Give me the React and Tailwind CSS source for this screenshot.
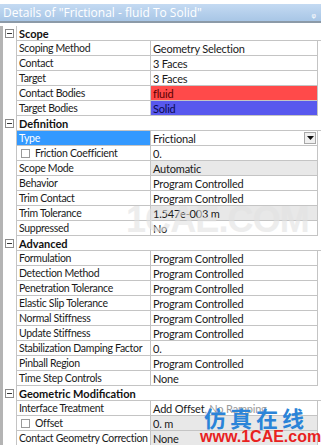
import React from 'react';

const sections = [
  {
    title: 'Scope',
    rows: [
      { name: 'Scoping Method', value: 'Geometry Selection' },
      { name: 'Contact', value: '3 Faces' },
      { name: 'Target', value: '3 Faces' },
      { name: 'Contact Bodies', value: 'fluid', tone: 'red' },
      { name: 'Target Bodies', value: 'Solid', tone: 'blue' },
    ],
  },
  {
    title: 'Definition',
    rows: [
      { name: 'Type', value: 'Frictional', selected: true, dropdown: true },
      { name: 'Friction Coefficient', value: '0.', check: true },
      { name: 'Scope Mode', value: 'Automatic', gray: true },
      { name: 'Behavior', value: 'Program Controlled' },
      { name: 'Trim Contact', value: 'Program Controlled' },
      { name: 'Trim Tolerance', value: '1.547e-003 m', gray: true },
      { name: 'Suppressed', value: 'No' },
    ],
  },
  {
    title: 'Advanced',
    rows: [
      { name: 'Formulation', value: 'Program Controlled' },
      { name: 'Detection Method', value: 'Program Controlled' },
      { name: 'Penetration Tolerance', value: 'Program Controlled' },
      { name: 'Elastic Slip Tolerance', value: 'Program Controlled' },
      { name: 'Normal Stiffness', value: 'Program Controlled' },
      { name: 'Update Stiffness', value: 'Program Controlled' },
      { name: 'Stabilization Damping Factor', value: '0.' },
      { name: 'Pinball Region', value: 'Program Controlled' },
      { name: 'Time Step Controls', value: 'None' },
    ],
  },
  {
    title: 'Geometric Modification',
    rows: [
      { name: 'Interface Treatment', value: 'Add Offset, No Ramping' },
      { name: 'Offset', value: '0. m', check: true, gray: true },
      { name: 'Contact Geometry Correction', value: 'None', gray: true },
    ],
  },
];

function Row({ row }) {
  let valueBg = 'bg-white text-[#1a1a1a]';
  if (row.tone === 'red') valueBg = 'bg-[#ff4a4a] text-[#5a0000]';
  if (row.tone === 'blue') valueBg = 'bg-[#5858ee] text-[#0a0a50]';
  if (row.gray) valueBg = 'bg-[#e8e8e8] text-[#1a1a1a]';

  return (
    <div className="flex h-[15px]">
      <div className="w-[13px] shrink-0" />
      <div className={`w-[134px] shrink-0 flex items-center border-l border-b border-[#c4c4c4] pl-[2px] text-[10.5px] tracking-[-0.3px] ${row.selected ? 'bg-[#3399ff] text-white' : 'text-[#1a1a1a]'}`}>
        {row.check && <span className="w-[9px] h-[9px] border border-[#9a9a9a] bg-white mr-[5px] ml-[2px] shrink-0" />}
        <span className="whitespace-nowrap">{row.name}</span>
      </div>
      <div className={`w-[168px] shrink-0 flex items-center border-l border-b border-r border-[#c4c4c4] pl-[2px] whitespace-nowrap tracking-[-0.2px] ${valueBg}`}>
        {row.dropdown ? (
          <div className="flex items-center justify-between w-full h-full">
            <span>{row.value}</span>
            <span className="w-[12px] h-[12px] mr-[1px] bg-[#f0f0f0] border border-[#a8a8a8] flex items-center justify-center">
              <svg width="7" height="4" viewBox="0 0 7 4"><path d="M0 0h7L3.5 4z" fill="#111" /></svg>
            </span>
          </div>
        ) : row.name === 'Interface Treatment' ? (
          <span>Add Offset<span className="text-[#9a9a9a]">, No Ramping</span></span>
        ) : (
          <span>{row.value}</span>
        )}
      </div>
    </div>
  );
}

function Header({ title }) {
  return (
    <div className="flex h-[15px]">
      <div className="w-[13px] shrink-0 flex items-center justify-center">
        <span className="w-[9px] h-[9px] border border-[#8a8a8a] bg-white flex items-center justify-center">
          <span className="w-[5px] h-px bg-[#333]" />
        </span>
      </div>
      <div className="flex-1 flex items-center pl-[2px] font-bold text-[#111] border-l border-b border-[#c4c4c4]">
        {title}
      </div>
    </div>
  );
}

export default function App() {
  return (
    <div className="w-[321px] h-[445px] overflow-hidden bg-white relative text-[11px] leading-none font-['Lato','Noto_Sans',sans-serif]">
      <div className="pt-[4px]">
        <div className="h-[19px] flex items-center justify-between px-[3px] bg-gradient-to-b from-[#c4daf2] to-[#a8c6e6] border-b-2 border-[#8c9aa8] text-white text-[12px] font-['Open_Sans',sans-serif]">
          <span>Details of "Frictional - fluid To Solid"</span>
          <span className="text-[10px] mr-[2px]">ᵩ</span>
        </div>
      </div>
      <div className="h-[3px]" />
      <div className="border-l-[3px] border-[#b4b4b4] w-[321px]">
        {sections.map((s) => (
          <div key={s.title}>
            <Header title={s.title} />
            {s.rows.map((r) => (
              <Row key={r.name} row={r} />
            ))}
          </div>
        ))}
      </div>

      <div className="absolute left-[126px] top-[202px] text-[36px] font-bold text-[#e2e2e2] opacity-60 tracking-tight font-['Liberation_Sans',sans-serif] leading-none pointer-events-none">
        1CAE.COM
      </div>
      <div className="absolute left-[204px] top-[406px] text-[22px] font-bold text-[#2b84d8] tracking-[4px] font-['Noto_Sans_CJK_SC',sans-serif] leading-none">
        仿真在线
      </div>
      <div className="absolute left-[200px] top-[429px] text-[16px] font-bold text-[#e8221f] font-['Liberation_Sans',sans-serif] leading-none">
        www.1CAE.com
      </div>
    </div>
  );
}
